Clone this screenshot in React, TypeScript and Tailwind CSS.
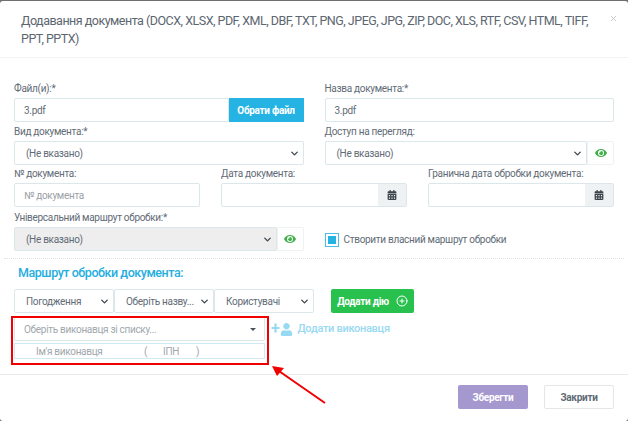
import { ChevronDown, CirclePlus, X } from "lucide-react";
import { FaCalendarAlt, FaEye, FaUser } from "react-icons/fa";

const label = "block text-[10px] leading-[14px] text-[#5f6b76] mb-[2px] whitespace-nowrap";
const box = "h-[24px] border border-[#dbe7ea] rounded-[2px] text-[10px] text-[#5f6b76] flex items-center";

function Sel({ text, w, grey }: { text: string; w?: string; grey?: boolean }) {
  return (
    <div className={`${box} ${w ?? "flex-1"} ${grey ? "bg-[#eeeeee]" : "bg-white"} justify-between pl-[11px] pr-[3px] min-w-0`}>
      <span className="whitespace-nowrap">{text}</span>
      <ChevronDown size={11} strokeWidth={3} className="text-[#3f4850] shrink-0" />
    </div>
  );
}

function EyeBtn() {
  return (
    <div className="w-[27px] h-[24px] border border-[#eef2f3] rounded-r-[2px] flex items-center justify-center">
      <FaEye size={12} className="text-[#3fae49]" />
    </div>
  );
}

function DateInput() {
  return (
    <div className={`${box} bg-white justify-end`}>
      <div className="w-[28px] h-full bg-[#eef2f3] flex items-center justify-center">
        <FaCalendarAlt size={10} className="text-[#3c444b]" />
      </div>
    </div>
  );
}

export default function App() {
  return (
    <div className="relative w-[628px] h-[421px] overflow-hidden bg-[#6f6f6f] pt-px tracking-[-0.3px] font-['Roboto','Open_Sans',sans-serif]">
      <div className="h-[420px] bg-white rounded-[3px] flex flex-col">
        <header className="relative h-[57px] border-b border-[#f0f2f3] pl-[21px] pr-[30px] pt-[11px] text-[12.5px] leading-[18px] tracking-[-0.5px] text-[#5c6670] shrink-0">
          Додавання документа (DOCX, XLSX, PDF, XML, DBF, TXT, PNG, JPEG, JPG, ZIP, DOC, XLS, RTF, CSV, HTML, TIFF, PPT, PPTX)
          <X size={9} strokeWidth={2.5} className="absolute right-[10px] top-[13px] text-[#c4c8cb]" />
        </header>

        <div className="px-[14px] pt-[24px]">
          <div className="grid grid-cols-2 gap-x-[21px]">
            <div>
              <span className={label}>Файл(и):*</span>
              <div className="flex h-[24px]">
                <div className={`${box} flex-1 pl-[9px]`}>3.pdf</div>
                <div className="w-[75px] bg-[#25b3e4] text-white text-[10px] font-bold flex items-center justify-center">Обрати файл</div>
              </div>
            </div>
            <div>
              <span className={label}>Назва документа:*</span>
              <div className={`${box} pl-[9px]`}>3.pdf</div>
            </div>
          </div>

          <div className="grid grid-cols-2 gap-x-[21px] mt-[3px]">
            <div>
              <span className={label}>Вид документа:*</span>
              <Sel text="(Не вказано)" />
            </div>
            <div>
              <span className={label}>Доступ на перегляд:</span>
              <div className="flex">
                <Sel text="(Не вказано)" />
                <EyeBtn />
              </div>
            </div>
          </div>

          <div className="grid grid-cols-3 gap-x-[21px] mt-[2px]">
            <div>
              <span className={label}>№ документа:</span>
              <div className={`${box} pl-[9px] text-[#9aa1a7] text-[9.5px]`}>№ документа</div>
            </div>
            <div>
              <span className={label}>Дата документа:</span>
              <DateInput />
            </div>
            <div>
              <span className={label}>Гранична дата обробки документа:</span>
              <DateInput />
            </div>
          </div>

          <div className="grid grid-cols-2 gap-x-[21px] mt-[4px]">
            <div>
              <span className={label}>Універсальний маршрут обробки:*</span>
              <div className="flex">
                <Sel text="(Не вказано)" grey />
                <EyeBtn />
              </div>
            </div>
            <div className="flex items-end h-[40px] pb-[4px] gap-[5px]">
              <div className="w-[14px] h-[14px] border border-[#4dbde8] flex items-center justify-center">
                <div className="w-[8px] h-[8px] bg-[#25b3e4]" />
              </div>
              <span className="text-[10px] leading-[14px] text-[#5f6b76]">Створити власний маршрут обробки</span>
            </div>
          </div>
        </div>

        <div className="mx-[4px] mt-[7px] border-t border-dotted border-[#dfe3e5]" />

        <div className="px-[14px]">
          <h2 className="pl-[4px] mt-[5px] text-[12.5px] leading-[18px] tracking-[-0.45px] font-medium text-[#25aee0]">Маршрут обробки документа:</h2>
          <div className="flex items-center mt-[7px]">
            <Sel text="Погодження" w="w-[100px]" />
            <Sel text="Оберіть назву..." w="w-[100px]" />
            <Sel text="Користувачі" w="w-[100px]" />
            <div className="ml-[17px] w-[83px] h-[24px] rounded-[2px] bg-[#29c14d] text-white text-[10px] font-bold flex items-center justify-center gap-[7px]">
              Додати дію
              <CirclePlus size={12} />
            </div>
          </div>
          <div className="flex mt-[4px]">
            <div className="w-[251px]">
              <div className="h-[24px] border border-[#dbe7ea] rounded-[2px] flex items-center justify-between pl-[9px] pr-[8px] text-[10px] text-[#a0a7ac]">
                Оберіть виконавця зі списку...
                <span className="w-0 h-0 border-x-[3px] border-x-transparent border-t-[3px] border-t-[#4a5259]" />
              </div>
              <div className="mt-[2px] h-[16px] border border-[#cfeaf5] flex items-center text-[10px] text-[#a0a7ac] pl-[21px]">
                <span className="w-[108px]">Ім'я виконавця</span>
                <span className="w-[19px]">(</span>
                <span className="w-[33px]">ІПН</span>
                <span>)</span>
              </div>
            </div>
            <div className="ml-[6px] h-[24px] flex items-center text-[#98d9f2]">
              <span className="text-[16px] font-bold leading-none">+</span>
              <FaUser size={13} className="ml-[1px]" />
              <span className="ml-[4px] text-[11px] font-medium">Додати виконавця</span>
            </div>
          </div>
        </div>

        <footer className="mt-[15px] border-t border-[#e8ebec] px-[14px] pt-[10px] flex justify-end gap-[16px]">
          <div className="w-[70px] h-[24px] rounded-[2px] bg-[#a598cf] text-white text-[10px] font-bold flex items-center justify-center">Зберегти</div>
          <div className="w-[70px] h-[24px] rounded-[2px] border border-[#e3e7e9] text-[#5f6b76] text-[10px] font-bold flex items-center justify-center">Закрити</div>
        </footer>
      </div>

      <div className="absolute left-[11px] top-[316px] w-[258px] h-[49px] border-2 border-[#f00000]" />
      <svg className="absolute left-[268px] top-[360px]" width="60" height="46" viewBox="0 0 60 46">
        <path d="M57 43 L8 9" stroke="#f00000" strokeWidth="2" fill="none" />
        <path d="M4 6 L16 8 L9 16 Z" fill="#f00000" />
      </svg>
    </div>
  );
}
